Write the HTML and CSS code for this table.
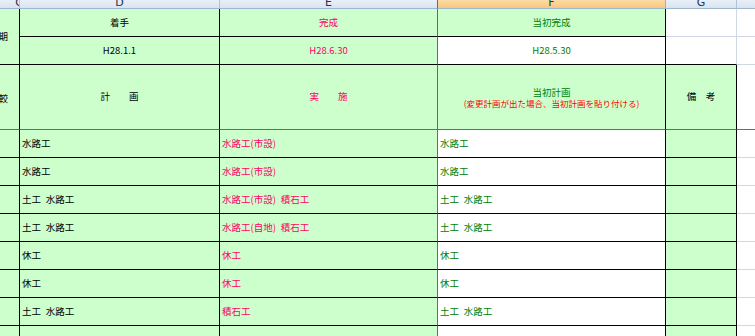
FILE: index.html
```html
<!DOCTYPE html>
<html lang="ja">
<head>
<meta charset="utf-8">
<title>工程表</title>
<link rel="stylesheet" href="styles.css">
</head>
<body>
<div class="sheet">
  <!-- column headers -->
  <div class="c hd hd-c"><span class="hl">C</span></div>
  <div class="c hd"><span class="hl">D</span></div>
  <div class="c hd fr-r"><span class="hl">E</span></div>
  <div class="c hd hd-sel"><span class="hl">F</span></div>
  <div class="c hd"><span class="hl">G</span></div>
  <div class="c hd"></div>

  <!-- row 1 -->
  <div class="c g bk-r bk-b span2 clip"><span>工期</span></div>
  <div class="c g bk-r bk-b ctr tk">着手</div>
  <div class="c g fr-r bk-b ctr tp">完成</div>
  <div class="c g bk-r bk-b ctr tg">当初完成</div>
  <div class="c w gl-r gl-b"></div>
  <div class="c w gl-r gl-b"></div>

  <!-- row 2 -->
  <div class="c g bk-r bk-b ctr tk">H28.1.1</div>
  <div class="c g fr-r bk-b ctr tp">H28.6.30</div>
  <div class="c w bk-r bk-b ctr tg">H28.5.30</div>
  <div class="c w gl-r bk-b"></div>
  <div class="c w gl-r gl-b"></div>

  <!-- row 3 -->
  <div class="c g bk-r fr-b clip clip-low"><span>比較</span></div>
  <div class="c g bk-r fr-b ctr tk">計　　画</div>
  <div class="c g fr-r fr-b ctr tp">実　　施</div>
  <div class="c g bk-r fr-b ctr stack">
    <span class="tg head">当初計画</span>
    <span class="tr note">(変更計画が出た場合、当初計画を貼り付ける)</span>
  </div>
  <div class="c g bk-r fr-b ctr tk">備&ensp;&ensp;考</div>
  <div class="c w gl-r fr-b"></div>

  <!-- data rows -->
  <div class="c g bk-r bk-b"></div>
  <div class="c g bk-r bk-b tx tk">水路工</div>
  <div class="c g fr-r bk-b tx tp">水路工(市設)</div>
  <div class="c w bk-r bk-b tx tg">水路工</div>
  <div class="c g bk-r bk-b"></div>
  <div class="c w gl-r gl-b"></div>

  <div class="c g bk-r bk-b"></div>
  <div class="c g bk-r bk-b tx tk">水路工</div>
  <div class="c g fr-r bk-b tx tp">水路工(市設)</div>
  <div class="c w bk-r bk-b tx tg">水路工</div>
  <div class="c g bk-r bk-b"></div>
  <div class="c w gl-r gl-b"></div>

  <div class="c g bk-r bk-b"></div>
  <div class="c g bk-r bk-b tx tk">土工&ensp;水路工</div>
  <div class="c g fr-r bk-b tx tp">水路工(市設)&ensp;積石工</div>
  <div class="c w bk-r bk-b tx tg">土工&ensp;水路工</div>
  <div class="c g bk-r bk-b"></div>
  <div class="c w gl-r gl-b"></div>

  <div class="c g bk-r bk-b"></div>
  <div class="c g bk-r bk-b tx tk">土工&ensp;水路工</div>
  <div class="c g fr-r bk-b tx tp">水路工(自地)&ensp;積石工</div>
  <div class="c w bk-r bk-b tx tg">土工&ensp;水路工</div>
  <div class="c g bk-r bk-b"></div>
  <div class="c w gl-r gl-b"></div>

  <div class="c g bk-r bk-b"></div>
  <div class="c g bk-r bk-b tx tk">休工</div>
  <div class="c g fr-r bk-b tx tp">休工</div>
  <div class="c w bk-r bk-b tx tg">休工</div>
  <div class="c g bk-r bk-b"></div>
  <div class="c w gl-r gl-b"></div>

  <div class="c g bk-r bk-b"></div>
  <div class="c g bk-r bk-b tx tk">休工</div>
  <div class="c g fr-r bk-b tx tp">休工</div>
  <div class="c w bk-r bk-b tx tg">休工</div>
  <div class="c g bk-r bk-b"></div>
  <div class="c w gl-r gl-b"></div>

  <div class="c g bk-r bk-b"></div>
  <div class="c g bk-r bk-b tx tk">土工&ensp;水路工</div>
  <div class="c g fr-r bk-b tx tp">積石工</div>
  <div class="c w bk-r bk-b tx tg">土工&ensp;水路工</div>
  <div class="c g bk-r bk-b"></div>
  <div class="c w gl-r gl-b"></div>

  <div class="c g bk-r bk-b"></div>
  <div class="c g bk-r bk-b"></div>
  <div class="c g fr-r bk-b"></div>
  <div class="c w bk-r bk-b"></div>
  <div class="c g bk-r bk-b"></div>
  <div class="c w gl-r gl-b"></div>
</div>
</body>
</html>
```
FILE: styles.css
```css
html, body {
  margin: 0;
  padding: 0;
  background: #ffffff;
  overflow: hidden;
}

.sheet {
  display: grid;
  grid-template-columns: 20px 200px 218px 228px 71px 19px;
  grid-template-rows: 9px 28px 28px 65px repeat(8, 28px);
  width: 756px;
  font-family: "Noto Sans CJK JP", "Noto Sans", sans-serif;
  font-size: 9.5px;
  line-height: 1.2;
}

.c {
  box-sizing: border-box;
  min-width: 0;
  overflow: hidden;
  white-space: nowrap;
  display: flex;
  align-items: center;
}

/* column header bar */
.hd {
  background: linear-gradient(#e9eff8, #d9e3f1);
  border-right: 1px solid #b3c3d9;
  border-bottom: 1px solid #9eb6ce;
  justify-content: center;
  align-items: flex-end;
  font-family: "DejaVu Sans", sans-serif;
  font-size: 11px;
  color: #24364f;
}
.hd .hl {
  line-height: 8px;
  height: 8px;
  display: block;
  margin-bottom: 1px;
}
.hd-c {
  justify-content: flex-end;
}
.hd-c .hl {
  margin-right: -4px;
}
.hd-sel {
  background: linear-gradient(#fbdca6, #f8c878);
  border-right: 1px solid #d7a85e;
}

/* fills */
.g { background: #ccffcc; }
.w { background: #ffffff; }

/* borders */
.bk-r { border-right: 1px solid #000000; }
.bk-b { border-bottom: 1px solid #000000; }
.fr-r { border-right: 1px solid #6b6b6b; }
.fr-b { border-bottom: 1px solid #6b6b6b; }
.gl-r { border-right: 1px solid #d0d7e5; }
.gl-b { border-bottom: 1px solid #d0d7e5; }

.span2 { grid-row: span 2; }

/* text */
.ctr { justify-content: center; text-align: center; }
.tx { padding-left: 2px; }
.tk { color: #000000; }
.tp { color: #ff0066; }
.tg { color: #008000; }
.tr { color: #ff0000; }

.stack {
  flex-direction: column;
  padding-top: 1px;
}
.head {
  line-height: 11px;
}
.note {
  font-size: 8.5px;
  line-height: 11px;
}

/* clipped text from column C */
.clip {
  justify-content: flex-end;
  color: #000000;
}
.clip span {
  flex: none;
  margin-right: 11px;
}
.clip-low {
  padding-top: 4px;
}
```
